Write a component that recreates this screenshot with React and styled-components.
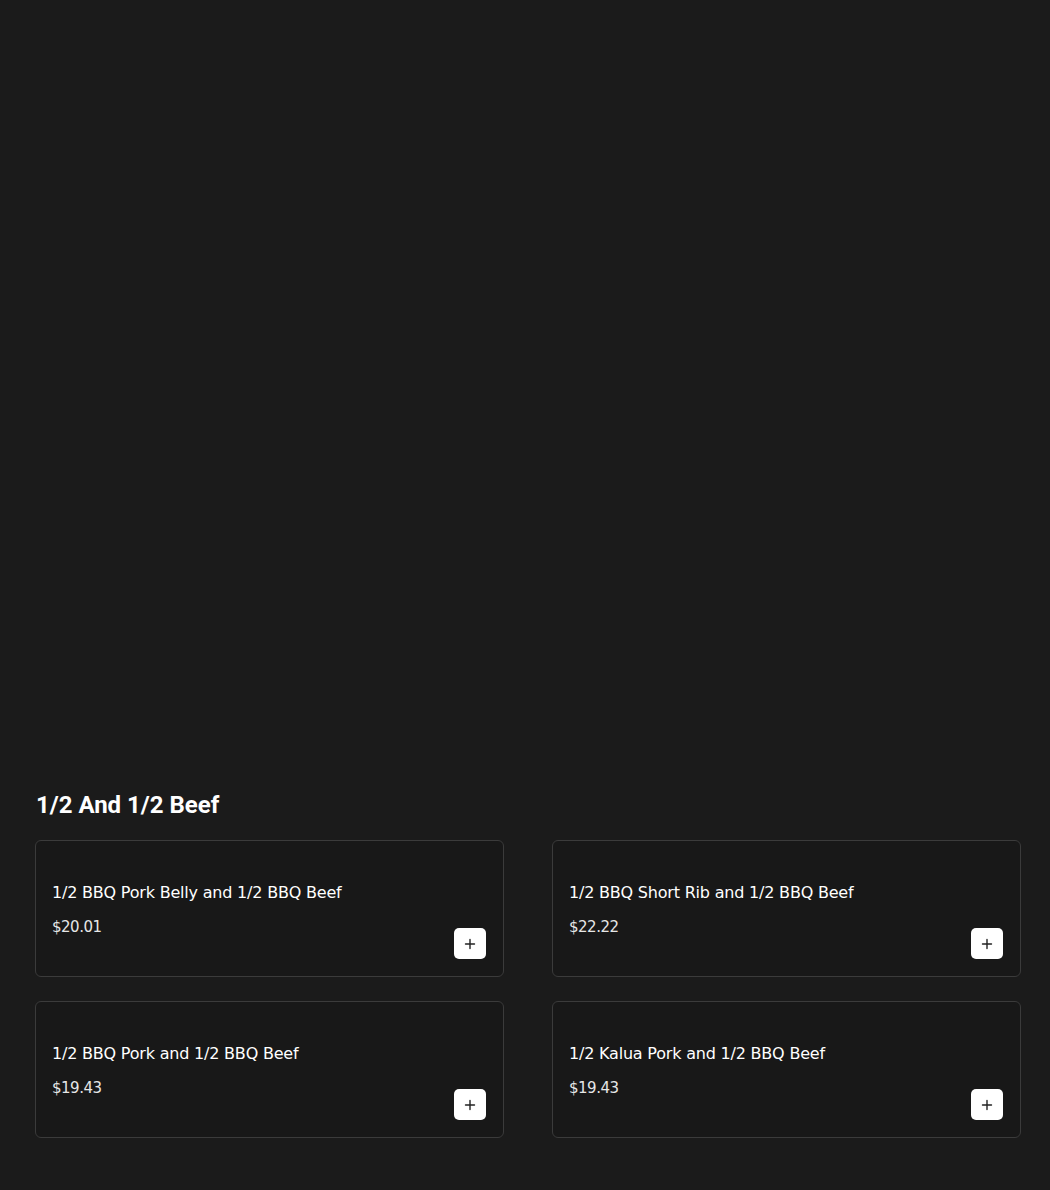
import React from "react";
import styled, { createGlobalStyle } from "styled-components";

const Global = createGlobalStyle`
  html, body { margin: 0; padding: 0; background: #1b1b1b; }
  body { font-family: "Noto Sans", sans-serif; color: #fff; }
`;

const Page = styled.div`
  min-height: 1190px;
  background: #1b1b1b;
  padding: 791px 30px 40px 35px;
  box-sizing: border-box;
`;

const Heading = styled.h2`
  margin: 0 0 21px 1px;
  font-family: Roboto, "Liberation Sans", sans-serif;
  font-weight: 700;
  font-size: 24px;
  line-height: 28px;
  color: #ffffff;
`;

const Grid = styled.div`
  display: grid;
  grid-template-columns: 469px 469px;
  column-gap: 48px;
  row-gap: 24px;
`;

const Card = styled.div`
  box-sizing: border-box;
  height: 137px;
  border: 1px solid #3b3b3b;
  border-radius: 6px;
  background: #181818;
  padding: 16px;
  display: flex;
  align-items: flex-end;
  justify-content: space-between;
`;

const Info = styled.div`
  display: flex;
  flex-direction: column;
  align-self: stretch;
  padding-top: 26px;
`;

const Name = styled.div`
  font-family: "DejaVu Sans", sans-serif;
  font-weight: 400;
  font-size: 16px;
  line-height: 20px;
  letter-spacing: -0.2px;
  color: #ffffff;
`;

const Price = styled.div`
  margin-top: 14px;
  font-family: "DejaVu Sans", sans-serif;
  font-size: 15px;
  line-height: 20px;
  letter-spacing: -0.5px;
  color: #e6e6e6;
`;

const AddButton = styled.button`
  width: 32px;
  height: 31px;
  margin: 0 1px 1px 0;
  border: none;
  border-radius: 5px;
  background: #ffffff;
  display: flex;
  align-items: center;
  justify-content: center;
  padding: 0;
  cursor: pointer;
`;

const items = [
  { name: "1/2 BBQ Pork Belly and 1/2 BBQ Beef", price: "$20.01" },
  { name: "1/2 BBQ Short Rib and 1/2 BBQ Beef", price: "$22.22" },
  { name: "1/2 BBQ Pork and 1/2 BBQ Beef", price: "$19.43" },
  { name: "1/2 Kalua Pork and 1/2 BBQ Beef", price: "$19.43" },
];

const Plus = () => (
  <svg width="12" height="12" viewBox="0 0 12 12" fill="none">
    <path d="M6 1.5v9M1.5 6h9" stroke="#222" strokeWidth="1.4" strokeLinecap="round" />
  </svg>
);

export default function App() {
  return (
    <>
      <Global />
      <Page>
        <Heading>1/2 And 1/2 Beef</Heading>
        <Grid>
          {items.map((it) => (
            <Card key={it.name}>
              <Info>
                <Name>{it.name}</Name>
                <Price>{it.price}</Price>
              </Info>
              <AddButton aria-label="Add">
                <Plus />
              </AddButton>
            </Card>
          ))}
        </Grid>
      </Page>
    </>
  );
}
